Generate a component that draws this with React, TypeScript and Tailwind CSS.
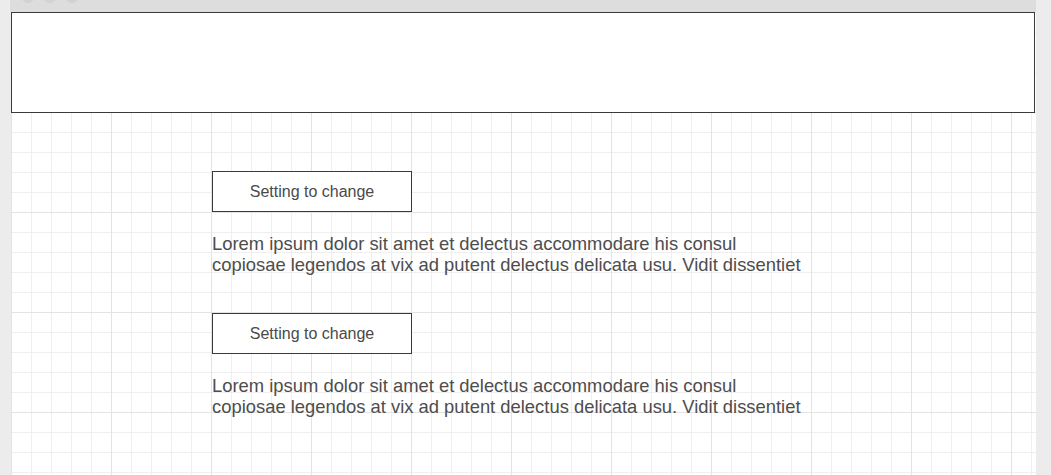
import React from "react";

function Setting() {
  return (
    <div className="flex flex-col">
      <div className="flex h-[41px] w-[200px] items-center justify-center border border-[#3a3a3a] bg-white text-[16px] text-[#4a4a4a]">
        Setting to change
      </div>
      <p className="mt-[21px] text-[18.4px] leading-[21px] text-[#4d4d4d]">
        Lorem ipsum dolor sit amet et delectus accommodare his consul
        <br />
        copiosae legendos at vix ad putent delectus delicata usu. Vidit dissentiet
      </p>
    </div>
  );
}

export default function App() {
  return (
    <div
      className="flex h-[475px] w-[1051px] overflow-hidden bg-[#ececec]"
      style={{ fontFamily: '"Liberation Sans", Arial, sans-serif' }}
    >
      <div className="w-[10px] shrink-0" />
      <div className="flex w-[1026px] shrink-0 flex-col">
        <div className="flex h-[12px] shrink-0 gap-[10px] overflow-hidden bg-[#dddddd] pl-[12px]">
          <div className="-mt-[9px] h-[12px] w-[12px] rounded-full bg-[#d2d2d2]" />
          <div className="-mt-[9px] h-[12px] w-[12px] rounded-full bg-[#d2d2d2]" />
          <div className="-mt-[9px] h-[12px] w-[12px] rounded-full bg-[#d2d2d2]" />
        </div>
        <div className="ml-[1px] flex flex-1 flex-col bg-white bg-[linear-gradient(to_right,#e3e3e3_1px,transparent_1px),linear-gradient(to_bottom,#e3e3e3_1px,transparent_1px),linear-gradient(to_right,#efefef_1px,transparent_1px),linear-gradient(to_bottom,#efefef_1px,transparent_1px)] bg-[size:100px_100px,100px_100px,20px_20px,20px_20px]">
          <div className="h-[101px] w-[1024px] shrink-0 border border-[#3a3a3a] bg-white" />
          <div className="flex flex-col gap-[38px] pl-[201px] pt-[58px]">
            <Setting />
            <Setting />
          </div>
        </div>
      </div>
    </div>
  );
}
